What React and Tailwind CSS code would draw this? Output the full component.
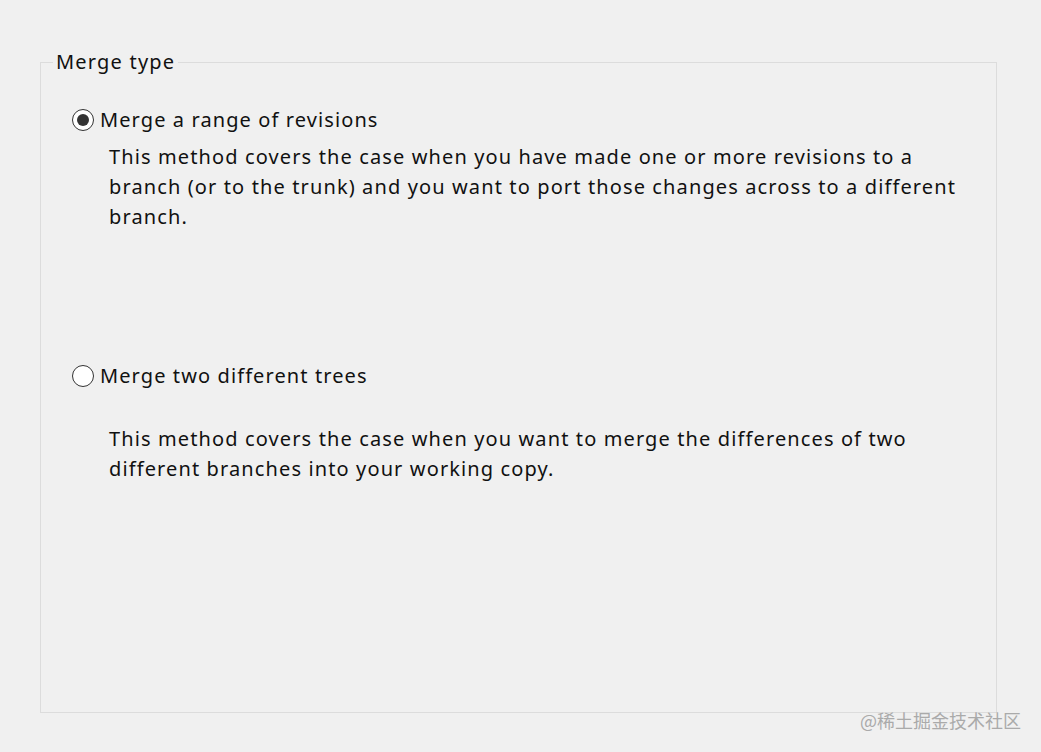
import React from 'react';

const font = { fontFamily: '"Noto Sans", "Liberation Sans", sans-serif' };

const Radio = ({ checked }) => (
  <span className="flex h-[22px] w-[22px] items-center justify-center rounded-full border border-[#333] bg-white">
    {checked && <span className="h-[12px] w-[12px] rounded-full bg-[#333]" />}
  </span>
);

export default function App() {
  return (
    <div className="relative h-[752px] w-[1041px] bg-[#f0f0f0] text-[#111]" style={font}>
      <div className="pl-[40px] pt-[50px]">
        <fieldset className="h-[663px] w-[957px] border border-[#dcdcdc] px-0 pt-0">
          <legend className="ml-[12px] px-[3px] text-[20px] leading-[24px] tracking-[1.2px]">Merge type</legend>
          <div className="pl-[31px]">
            <div className="mt-[32px] flex items-center gap-[6px]">
              <Radio checked />
              <span className="text-[20px] leading-[28px] tracking-[1.1px]">Merge a range of revisions</span>
            </div>
            <p className="ml-[37px] mt-[8px] whitespace-nowrap text-[20px] leading-[30px] tracking-[1.12px]">
              This method covers the case when you have made one or more revisions to a<br />
              branch (or to the trunk) and you want to port those changes across to a different<br />
              branch.
            </p>
            <div className="mt-[130px] flex items-center gap-[6px]">
              <Radio />
              <span className="text-[20px] leading-[28px] tracking-[1.1px]">Merge two different trees</span>
            </div>
            <p className="ml-[37px] mt-[34px] whitespace-nowrap text-[20px] leading-[30px] tracking-[1.12px]">
              This method covers the case when you want to merge the differences of two<br />
              different branches into your working copy.
            </p>
          </div>
        </fieldset>
      </div>
      <div className="absolute left-[860px] top-[707px] text-[18px] text-[#aaa]" style={{ fontFamily: '"Noto Sans CJK SC", sans-serif' }}>
        @稀土掘金技术社区
      </div>
    </div>
  );
}
